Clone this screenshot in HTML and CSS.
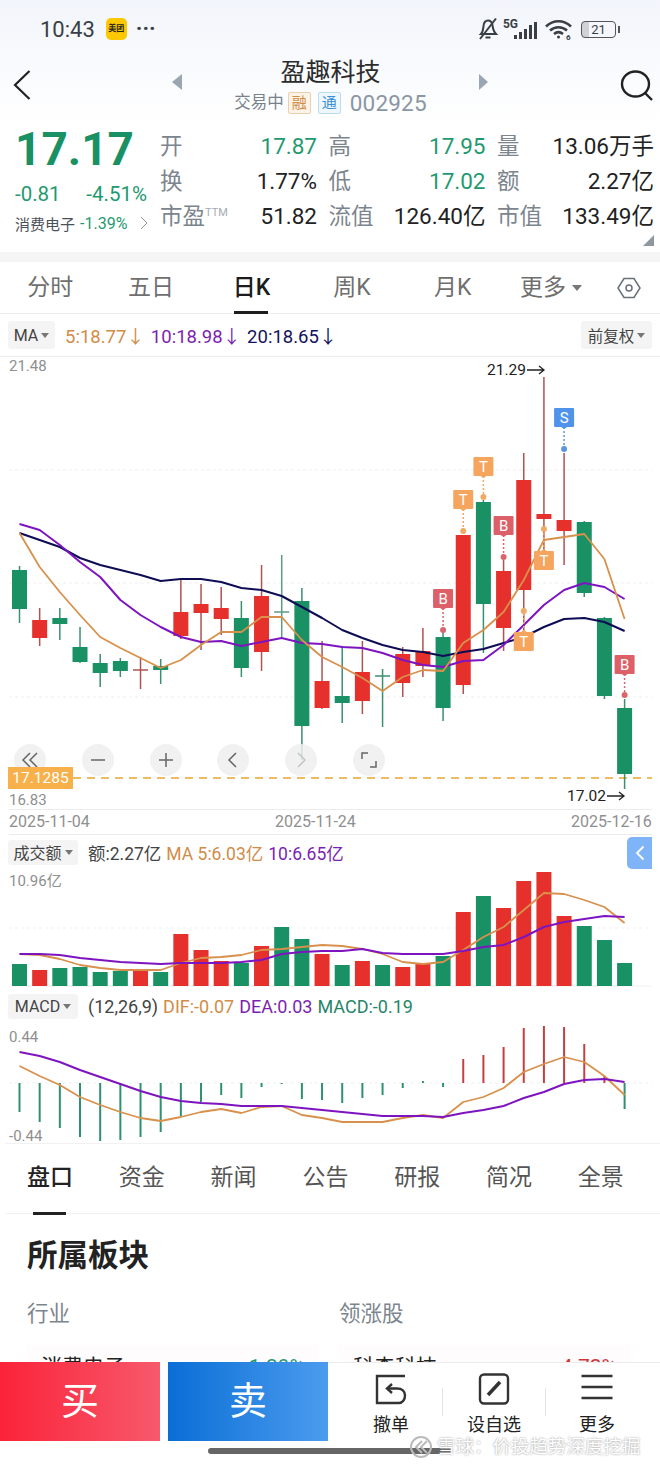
FILE: index.html
```html
<!DOCTYPE html>
<html lang="zh-CN">
<head>
    <meta charset="UTF-8">
    <title>盈趣科技 002925</title>
    <link rel="stylesheet" href="styles.css">
</head>
<body>
<div class="page">

    <!-- 状态栏 -->
    <div class="status">
        <div class="status-left">
            <span class="clock">10:43</span>
            <span class="app-badge">美团</span>
            <span class="status-dots">···</span>
        </div>
        <div class="status-right">
            <svg width="22" height="24" viewBox="0 0 22 24" class="ico-stroke">
                <path d="M4 17c2-2 2-4 2.500-8C7 5 9 3.500 11 3.500S15 5 15.500 8.500 17 15 19 17z"/>
                <path d="M8.500 20.500h5"/>
                <path d="M3 22 19 1.500"/>
            </svg>
            <span class="net">5G</span>
            <svg width="24" height="18" viewBox="0 0 24 18" class="signal">
                <rect x="0" y="13" width="3" height="4"/>
                <rect x="5" y="10" width="3" height="7"/>
                <rect x="10" y="7" width="3" height="10"/>
                <rect x="15" y="3" width="3" height="14"/>
                <rect x="20" y="0" width="3" height="17"/>
            </svg>
            <svg width="27" height="21" viewBox="0 0 27 21" class="ico-stroke wifi">
                <path d="M1 7.500c7-7 18-7 25 0"/>
                <path d="M5 11.500c5-4.500 12-4.500 17 0"/>
                <path d="M9 15c3-2.500 6-2.500 9 0"/>
                <circle cx="13.500" cy="18" r="1.500"/>
                <text class="wifi-gen" x="21" y="20.500">6</text>
            </svg>
            <span class="battery"><span class="battery-level">21</span></span>
        </div>
    </div>

    <!-- 标题栏 -->
    <div class="title-bar">
        <svg class="back" width="18" height="30" viewBox="0 0 18 30"><path d="M16.500 1 2 15l14.500 14"/></svg>
        <span class="tri tri-left"></span>
        <div class="title-mid">
            <div class="stock-name">盈趣科技</div>
            <div class="stock-sub">
                <span>交易中</span>
                <span class="flag flag-rong">融</span>
                <span class="flag flag-tong">通</span>
                <span class="stock-code">002925</span>
            </div>
        </div>
        <span class="tri tri-right"></span>
        <svg class="search" width="34" height="32" viewBox="0 0 34 32">
            <ellipse cx="15.500" cy="14" rx="13.500" ry="12.500"/>
            <path d="M25 23l7 7"/>
        </svg>
    </div>

    <!-- 行情 -->
    <div class="quote">
        <div class="quote-main">
            <div class="price">17.17</div>
            <div class="change"><span>-0.81</span><span>-4.51%</span></div>
            <div class="sector">
                <span>消费电子</span>
                <span class="sector-pct">-1.39%</span>
                <svg width="8" height="14" viewBox="0 0 8 14"><path d="M1 1l6 6-6 6"/></svg>
            </div>
        </div>
        <div class="stats">
            <div class="stat"><span class="stat-label">开</span><span class="down">17.87</span></div>
            <div class="stat"><span class="stat-label">高</span><span class="down">17.95</span></div>
            <div class="stat"><span class="stat-label">量</span><span>13.06万手</span></div>
            <div class="stat"><span class="stat-label">换</span><span>1.77%</span></div>
            <div class="stat"><span class="stat-label">低</span><span class="down">17.02</span></div>
            <div class="stat"><span class="stat-label">额</span><span>2.27亿</span></div>
            <div class="stat"><span class="stat-label">市盈<sup class="ttm">TTM</sup></span><span>51.82</span></div>
            <div class="stat"><span class="stat-label">流值</span><span>126.40亿</span></div>
            <div class="stat"><span class="stat-label">市值</span><span>133.49亿</span></div>
        </div>
        <span class="corner"></span>
    </div>
    <div class="band"></div>

    <!-- 周期 -->
    <div class="periods">
        <span>分时</span>
        <span>五日</span>
        <span class="period-on">日K</span>
        <span>周K</span>
        <span>月K</span>
        <span class="period-more">更多<i class="caret caret-big"></i></span>
        <svg class="hex" width="24" height="22" viewBox="0 0 24 22">
            <path d="M7 1.500h10L23 11l-6 9.500H7L1 11z"/>
            <circle cx="12" cy="11" r="3"/>
        </svg>
    </div>

    <div class="legend ma-legend">
        <span class="chip chip-ma">MA<i class="caret"></i></span>
        <span class="c-orange">5:18.77↓</span>
        <span class="c-purple">10:18.98↓</span>
        <span class="c-navy">20:18.65↓</span>
        <span class="chip chip-right">前复权<i class="caret"></i></span>
    </div>

    <!-- K线 -->
    <div class="panel kline-panel">
        <svg id="kline" class="chart" width="660" height="452" viewBox="0 357 660 452"></svg>
        <span class="axis axis-top">21.48</span>
        <span class="axis axis-low">16.83</span>
        <div class="zoom-btns">
            <span class="zoom-btn"><svg width="20" height="20" viewBox="0 0 20 20"><path d="M10 3 3 10l7 7M17 3l-7 7 7 7"/></svg></span>
            <span class="zoom-btn"><svg width="20" height="20" viewBox="0 0 20 20"><path d="M3 10h14"/></svg></span>
            <span class="zoom-btn"><svg width="20" height="20" viewBox="0 0 20 20"><path d="M3 10h14M10 3v14"/></svg></span>
            <span class="zoom-btn"><svg width="20" height="20" viewBox="0 0 20 20"><path d="M13 3l-7 7 7 7"/></svg></span>
            <span class="zoom-btn zoom-off"><svg width="20" height="20" viewBox="0 0 20 20"><path d="M7 3l7 7-7 7"/></svg></span>
            <span class="zoom-btn"><svg width="20" height="20" viewBox="0 0 20 20"><path d="M9 3H3v6M11 17h6v-6"/></svg></span>
        </div>
        <span class="price-tag">17.1285</span>
    </div>
    <div class="dates">
        <span>2025-11-04</span>
        <span>2025-11-24</span>
        <span>2025-12-16</span>
    </div>

    <!-- 成交额 -->
    <div class="legend vol-legend">
        <span class="chip chip-wide">成交额<i class="caret"></i></span>
        <span>额:2.27亿</span>
        <span class="c-orange">MA 5:6.03亿</span>
        <span class="c-purple">10:6.65亿</span>
        <span class="side-tab"><svg width="10" height="16" viewBox="0 0 10 16"><path d="M8.500 1.500 2 8l6.500 6.500"/></svg></span>
    </div>
    <div class="panel vol-panel">
        <svg id="volume" class="chart" width="660" height="117" viewBox="0 870 660 117"></svg>
        <span class="axis axis-vol">10.96亿</span>
    </div>

    <!-- MACD -->
    <div class="legend macd-legend">
        <span class="chip chip-wide">MACD<i class="caret"></i></span>
        <span>(12,26,9)</span>
        <span class="c-orange">DIF:-0.07</span>
        <span class="c-purple">DEA:0.03</span>
        <span class="c-green">MACD:-0.19</span>
    </div>
    <div class="panel macd-panel">
        <svg id="macd" class="chart" width="660" height="121" viewBox="0 1022 660 121"></svg>
        <span class="axis axis-macd-top">0.44</span>
        <span class="axis axis-macd-low">-0.44</span>
    </div>

    <!-- 详情 -->
    <div class="detail-tabs">
        <span class="detail-on">盘口</span>
        <span>资金</span>
        <span>新闻</span>
        <span>公告</span>
        <span>研报</span>
        <span>简况</span>
        <span>全景</span>
    </div>
    <div class="sectors">
        <h2>所属板块</h2>
        <div class="sector-cols">
            <div class="sector-col">
                <div class="col-head">行业</div>
                <div class="col-row"><span>消费电子</span><span class="down">-1.39%</span></div>
            </div>
            <div class="sector-col">
                <div class="col-head">领涨股</div>
                <div class="col-row"><span>科森科技</span><span class="up">4.72%</span></div>
            </div>
        </div>
    </div>

    <!-- 底部操作栏 -->
    <div class="action-bar">
        <div class="trade">
            <span class="trade-btn buy">买</span>
            <span class="trade-btn sell">卖</span>
        </div>
        <div class="tools">
            <div class="tool">
                <svg width="34" height="32" viewBox="0 0 34 32">
                    <path d="M31 3H3v27h22"/>
                    <path d="M18 11l-5 4.500 5 4.500"/>
                    <path d="M13.500 15.500H23c5 0 8 3 8 7s-2.500 7.500-6 7.500"/>
                </svg>
                <span>撤单</span>
            </div>
            <i class="tool-sep"></i>
            <div class="tool">
                <svg width="34" height="32" viewBox="0 0 34 32">
                    <rect x="3" y="1.500" width="28" height="29" rx="4"/>
                    <path class="pen" d="M11 22 23 9"/>
                </svg>
                <span>设自选</span>
            </div>
            <i class="tool-sep"></i>
            <div class="tool">
                <svg width="34" height="32" viewBox="0 0 34 32">
                    <path d="M1.500 3h31M1.500 14h31M1.500 25h31"/>
                </svg>
                <span>更多</span>
            </div>
        </div>
    </div>
    <div class="home-bar"></div>
    <div class="watermark">
        <svg width="24" height="24" viewBox="0 0 24 24">
            <circle cx="12" cy="12" r="10"/>
            <path d="M13 6 7 12l6 6M18 6l-6 6 6 6"/>
        </svg>
        <span>雪球：价投趋势深度挖掘</span>
    </div>
</div>
<script src="chart.js"></script>
</body>
</html>
```

FILE: styles.css
```css
:root {
    --green: #1a9164;
    --green-text: #1f9a70;
    --red: #e5302c;
    --orange: #d18c48;
    --purple: #7d1fb0;
    --navy: #14125c;
    --text: #222;
    --label: #7c858e;
    --axis: #8f8f8f;
    --line: #ececec;
    --chip: #f5f4f5;
}

body {
    margin: 0;
    font-family: Roboto, "Noto Sans CJK SC", sans-serif;
    color: var(--text);
    background: #fff;
}

.page {
    position: relative;
    width: 660px;
    height: 1467px;
    overflow: hidden;
    background: linear-gradient(#f2f5fb 0, #fff 125px);
}

svg {
    display: block;
    fill: none;
}

/* 状态栏 */
.status {
    height: 56px;
    padding: 2px 44px 0 40px;
    box-sizing: border-box;
    display: flex;
    justify-content: space-between;
    align-items: center;
}

.status-left,
.status-right {
    display: flex;
    align-items: center;
}

.clock {
    font-size: 22px;
    color: #3a3f45;
}

.app-badge {
    width: 21px;
    height: 22px;
    margin-left: 11px;
    border-radius: 5px;
    background: #fcc800;
    font-size: 8px;
    font-weight: 700;
    line-height: 22px;
    text-align: center;
    white-space: nowrap;
}

.status-dots {
    margin-left: 9px;
    font-size: 22px;
    font-weight: 700;
    line-height: 22px;
    color: #3a3f45;
}

.ico-stroke {
    stroke: #3a3f45;
    stroke-width: 2;
}

.net {
    margin: -11px -4px 0 4px;
    font-size: 12px;
    font-weight: 700;
    color: #3a3f45;
}

.signal {
    margin-top: 4px;
    fill: #3a3f45;
}

.wifi {
    margin-left: 7px;
    stroke-width: 2.5;
}

.wifi circle {
    fill: #3a3f45;
    stroke: none;
}

.wifi-gen {
    fill: #3a3f45;
    stroke: none;
    font-size: 8px;
    font-weight: 700;
}

.battery {
    position: relative;
    width: 33px;
    height: 15px;
    margin-left: 9px;
    border: 1.500px solid #555;
    border-radius: 4px;
    background: linear-gradient(90deg, #cfd2d6 21%, transparent 21%);
    text-align: center;
}

.battery::after {
    content: '';
    position: absolute;
    top: 4px;
    right: -5px;
    width: 2px;
    height: 7px;
    background: #555;
}

.battery-level {
    display: block;
    font-size: 13px;
    line-height: 15px;
    color: #3a3f45;
}

/* 标题栏 */
.title-bar {
    height: 66px;
    display: grid;
    grid-template-columns: 172px 10px 297px 9px 1fr;
    align-items: center;
}

.back {
    margin: 0 0 8px 13px;
    stroke: #222;
    stroke-width: 2.200;
}

.tri {
    width: 0;
    height: 0;
    border-top: 8px solid transparent;
    border-bottom: 8px solid transparent;
    margin-bottom: 14px;
}

.tri-left {
    border-right: 10px solid #9aa6b2;
}

.tri-right {
    border-left: 9px solid #9aa6b2;
}

.title-mid {
    margin-bottom: 7px;
    text-align: center;
}

.stock-name {
    font-size: 25px;
    line-height: 32px;
    color: #2c2c2c;
}

.stock-sub {
    display: flex;
    justify-content: center;
    align-items: center;
    margin-top: 2px;
    font-size: 16.500px;
    line-height: 24px;
    color: #79828c;
}

.flag {
    width: 21px;
    height: 20px;
    border-radius: 2px;
    font-size: 15px;
    line-height: 20px;
    text-align: center;
}

.flag-rong {
    margin-left: 4px;
    border: 1px solid #ecd0b0;
    background: #fdf3e7;
    color: #d18c48;
}

.flag-tong {
    margin-left: 7px;
    border: 1px solid #bcdcf0;
    background: #eef7fd;
    color: #3b8fd8;
}

.stock-code {
    margin-left: 9px;
    font-size: 22.500px;
    letter-spacing: 0.200px;
    color: #8a96a3;
}

.search {
    justify-self: end;
    margin-right: 6px;
    margin-bottom: 7px;
    stroke: #222;
    stroke-width: 2.400;
}

/* 行情 */
.quote {
    position: relative;
    height: 130px;
    display: flex;
}

.quote-main {
    width: 160px;
    padding-left: 15px;
    box-sizing: border-box;
}

.price {
    height: 55px;
    font-size: 46px;
    font-weight: 700;
    line-height: 55px;
    color: var(--green);
}

.change {
    width: 132px;
    height: 34px;
    display: flex;
    justify-content: space-between;
    font-size: 20.500px;
    line-height: 34px;
    color: var(--green-text);
}

.sector {
    height: 24px;
    display: flex;
    align-items: center;
    font-size: 15px;
    color: #4c5157;
}

.sector-pct {
    margin-left: 5px;
    font-size: 16px;
    color: var(--green-text);
}

.sector svg {
    margin-left: 13px;
    stroke: #8f979f;
}

.stats {
    display: grid;
    grid-template-columns: repeat(3, 157px);
    grid-auto-rows: 35px;
    column-gap: 11.500px;
    padding-top: 7px;
    font-size: 22.500px;
    line-height: 35px;
}

.stat {
    display: flex;
    justify-content: space-between;
    white-space: nowrap;
}

.stat-label {
    color: var(--label);
}

.ttm {
    font-size: 11px;
    line-height: 0;
    color: #a4abb2;
}

.down {
    color: var(--green-text);
}

.up {
    color: #d0343c;
}

.corner {
    position: absolute;
    right: 6px;
    bottom: 6px;
    border-left: 11px solid transparent;
    border-bottom: 11px solid #8f979f;
}

.band {
    height: 10px;
    background: #f5f5f6;
}

/* 周期 */
.periods {
    height: 52px;
    box-sizing: border-box;
    border-bottom: 1px solid var(--line);
    display: grid;
    grid-template-columns: repeat(5, 100.600px) 96px 1fr;
    align-items: center;
    justify-items: center;
    font-size: 23px;
    line-height: 50px;
    color: #6f6f6f;
}

.period-on {
    position: relative;
    color: #1c1c1c;
    font-weight: 500;
}

.period-on::after {
    content: '';
    position: absolute;
    left: 1px;
    right: 2px;
    bottom: -1px;
    height: 3px;
    background: #1c1c1c;
}

.period-more {
    display: flex;
    align-items: center;
}

.hex {
    margin-right: 1px;
    stroke: #6a7078;
    stroke-width: 1.500;
}

/* 图例 */
.legend {
    display: flex;
    align-items: center;
    white-space: nowrap;
}

.ma-legend {
    height: 42px;
    padding: 0 8px;
    column-gap: 6px;
    font-size: 18.500px;
}

.ma-legend .chip-ma {
    margin-right: 4px;
}

.vol-legend,
.macd-legend {
    position: relative;
    padding-left: 8px;
    column-gap: 5px;
    font-size: 17.500px;
    color: #444;
}

.vol-legend {
    height: 35px;
    padding-bottom: 1px;
    box-sizing: border-box;
}

.macd-legend {
    height: 35px;
    padding-top: 3px;
    box-sizing: border-box;
    font-size: 18px;
}

.c-orange { color: var(--orange); }
.c-purple { color: var(--purple); }
.c-navy { color: var(--navy); }
.c-green { color: #27856a; }

.chip {
    display: flex;
    align-items: center;
    justify-content: center;
    box-sizing: border-box;
    border-radius: 3px;
    background: var(--chip);
    font-size: 16px;
    color: #444;
}

.chip-ma {
    width: 47px;
    height: 28px;
}

.chip-right {
    width: 71px;
    height: 28px;
    margin-left: auto;
    font-size: 15.500px;
}

.chip-wide {
    width: 70px;
    height: 25px;
    margin-right: 5px;
}

.caret {
    display: inline-block;
    margin-left: 3px;
    border-left: 4px solid transparent;
    border-right: 4px solid transparent;
    border-top: 5px solid #777;
}

.caret-big {
    margin-left: 6px;
    border-left-width: 5px;
    border-right-width: 5px;
    border-top-width: 6px;
}

.side-tab {
    position: absolute;
    top: 2px;
    right: 8px;
    width: 25px;
    height: 32px;
    border-radius: 5px 0 0 5px;
    background: #80b4f8;
    display: flex;
    align-items: center;
    justify-content: center;
    stroke: #fff;
    stroke-width: 1.800;
}

/* 图表 */
.panel {
    position: relative;
}

.kline-panel {
    height: 452px;
    border-top: 1px solid var(--line);
}

.vol-panel {
    height: 117px;
}

.macd-panel {
    height: 121px;
}

.axis {
    position: absolute;
    left: 9px;
    font-size: 15px;
    line-height: 18px;
    color: var(--axis);
}

.axis-top { top: 0; }
.axis-low { top: 434px; }
.axis-vol { top: 2px; }
.axis-macd-top { top: 6px; }
.axis-macd-low { top: 105px; }

.price-tag {
    position: absolute;
    left: 8px;
    top: 410px;
    width: 65px;
    height: 22px;
    background: #f7b04a;
    color: #fff;
    font-size: 15.500px;
    line-height: 22px;
    text-align: center;
}

.zoom-btns {
    position: absolute;
    left: 14px;
    top: 387px;
    display: flex;
    column-gap: 35.800px;
}

.zoom-btn {
    width: 32px;
    height: 32px;
    border-radius: 50%;
    background: rgba(240, 238, 240, 0.85);
    display: flex;
    align-items: center;
    justify-content: center;
    stroke: #666;
    stroke-width: 1.500;
}

.zoom-off {
    stroke: #c4c4c4;
}

.dates {
    height: 26px;
    box-sizing: border-box;
    margin: 0 8px 0 9px;
    border-top: 1px solid var(--line);
    border-bottom: 1px solid var(--line);
    display: grid;
    grid-template-columns: 266px 296px 1fr;
    font-size: 16px;
    line-height: 24px;
    color: var(--axis);
}

/* 详情 */
.detail-tabs {
    height: 71px;
    box-sizing: border-box;
    margin-left: 5px;
    border-top: 1px solid #f1f1f1;
    border-bottom: 1px solid #f1f1f1;
    padding: 0 0 8px 22px;
    display: flex;
    column-gap: 45.800px;
    align-items: center;
    font-size: 23px;
    color: #555;
}

.detail-on {
    position: relative;
    color: #222;
    font-weight: 500;
}

.detail-on::after {
    content: '';
    position: absolute;
    left: 6px;
    right: 7px;
    bottom: -23px;
    height: 3px;
    background: #222;
}

.sectors {
    padding: 0 27px;
}

.sectors h2 {
    margin: 24px 0 0;
    font-size: 30.500px;
    font-weight: 700;
    line-height: 36px;
}

.sector-cols {
    display: flex;
    margin-top: 25px;
}

.sector-col {
    flex: none;
    width: 312px;
}

.col-head {
    font-size: 21.500px;
    line-height: 30px;
    color: var(--label);
}

.col-row {
    width: 292px;
    margin-top: 16px;
    padding: 8px 0 0 14px;
    box-sizing: border-box;
    display: flex;
    justify-content: space-between;
    font-size: 21px;
    line-height: 28px;
    background: #fefcfc;
}

.col-row span:last-child {
    margin-right: 14px;
}

/* 底部操作栏 */
.action-bar {
    position: absolute;
    left: 0;
    right: 0;
    bottom: 0;
    height: 105px;
    background: #fff;
    display: flex;
}

.trade {
    width: 328px;
    height: 79px;
    display: flex;
    column-gap: 8px;
}

.trade-btn {
    flex: 1;
    color: #fff;
    font-size: 38px;
    line-height: 79px;
    text-align: center;
}

.buy {
    background: linear-gradient(90deg, #fb2339, #f7596c);
}

.sell {
    background: linear-gradient(90deg, #0a6ed6, #4b9cee);
}

.tools {
    flex: 1;
    height: 79px;
    box-sizing: border-box;
    border-top: 1px solid var(--line);
    padding: 10px 0 0 45px;
    display: flex;
    column-gap: 33px;
    align-items: flex-start;
}

.tool {
    width: 36px;
    display: flex;
    flex-direction: column;
    align-items: center;
    font-size: 18px;
    line-height: 20px;
    color: #222;
    white-space: nowrap;
    stroke: #333;
    stroke-width: 2.400;
}

.tool svg {
    margin-bottom: 10px;
}

.tool .pen {
    stroke-width: 3.500;
}

.tool-sep {
    flex: none;
    width: 1px;
    height: 28px;
    margin-top: 15px;
    background: #e4e4e4;
}

.home-bar {
    position: absolute;
    left: 208px;
    bottom: 13px;
    width: 244px;
    height: 6px;
    border-radius: 3px;
    background: #666;
}

.watermark {
    position: absolute;
    left: 409px;
    bottom: 8px;
    display: flex;
    align-items: center;
    column-gap: 4px;
    font-size: 18.500px;
    line-height: 20px;
    color: #fff;
    text-shadow: 0 0 2px #888;
    white-space: nowrap;
    stroke: #bbb;
    stroke-width: 2;
}
```

FILE: chart.js
```js
// 每根K线的横坐标
const X0 = 19.5;
const STEP = 20.17;

function cx(i) {
    return X0 + i * STEP;
}

// [实体上沿, 实体下沿, 上影, 下影, 红/绿]，单位是页面像素
const candles = [
    [570, 609, 566, 623, 'g'], [620, 638, 608, 646, 'r'], [618, 624, 608, 640, 'g'],
    [647, 662, 627, 663, 'g'], [663, 673, 654, 687, 'g'], [661, 671, 658, 677, 'g'],
    [670, 670, 657, 689, 'r'], [666, 670, 659, 684, 'g'], [612, 636, 578, 639, 'r'],
    [604, 613, 584, 650, 'r'], [608, 619, 587, 635, 'r'], [618, 668, 601, 677, 'g'],
    [596, 652, 565, 671, 'r'], [612, 612, 555, 637, 'p'], [601, 726, 588, 760, 'g'],
    [681, 708, 641, 709, 'r'], [696, 703, 646, 723, 'g'], [672, 701, 641, 714, 'r'],
    [676, 676, 669, 727, 'g'], [654, 683, 647, 697, 'r'], [651, 666, 628, 677, 'r'],
    [637, 708, 632, 721, 'g'], [535, 685, 535, 694, 'r'], [502, 604, 500, 653, 'g'],
    [571, 628, 560, 651, 'r'], [480, 590, 453, 632, 'r'], [514, 519, 377, 550, 'r'],
    [520, 531, 453, 565, 'r'], [522, 593, 521, 597, 'g'], [618, 696, 617, 699, 'g'],
    [708, 774, 699, 789, 'g']
];

const ma5 = [533, 567, 592, 615, 637, 648, 658, 668, 660, 645, 632, 632, 617, 617, 640, 657,
    667, 678, 691, 677, 670, 671, 643, 630, 612, 580, 540, 537, 534, 559, 619];
const ma10 = [524, 530, 545, 562, 577, 600, 615, 627, 637, 642, 641, 646, 642, 638, 643, 644,
    647, 648, 653, 660, 665, 667, 661, 660, 645, 625, 605, 590, 583, 587, 599];
const ma20 = [533, 540, 547, 558, 565, 570, 575, 581, 579, 579, 582, 588, 590, 596, 607, 618,
    630, 638, 645, 650, 652, 656, 652, 649, 643, 637, 627, 619, 618, 622, 631];

const volTops = [964, 970, 968, 967, 972, 971, 970, 972, 934, 950, 961, 963, 946, 927, 939, 954,
    965, 961, 965, 967, 964, 956, 912, 896, 908, 881, 872, 916, 926, 940, 963];
const volRed = [1, 6, 8, 9, 10, 12, 15, 17, 19, 20, 22, 24, 25, 26, 27];
const volMa5 = [954, 955, 959, 965, 968, 970, 970, 970, 963, 958, 957, 955, 950, 949, 947, 945,
    946, 949, 954, 962, 964, 962, 950, 937, 927, 910, 893, 894, 900, 907, 923];
const volMa10 = [954, 954, 955, 958, 960, 962, 963, 964, 963, 963, 963, 962, 960, 954, 952, 951,
    951, 949, 953, 954, 954, 954, 951, 947, 945, 937, 927, 922, 919, 916, 917];

const macdBars = [1112, 1122, 1128, 1137, 1141, 1140, 1137, 1132, 1116, 1102, 1095, 1098, 1087, 1084, 1099, 1100,
    1103, 1098, 1095, 1088, 1081, 1087, 1059, 1055, 1047, 1028, 1026, 1027, 1044, 1076, 1109];
const macdRedFrom = 22;
const macdRedTo = 29;
const dif = [1066, 1076, 1085, 1097, 1105, 1112, 1118, 1121, 1117, 1112, 1109, 1113, 1107, 1106, 1115, 1118,
    1122, 1122, 1122, 1118, 1115, 1118, 1102, 1097, 1088, 1072, 1064, 1057, 1062, 1076, 1095];
const dea = [1052, 1056, 1062, 1070, 1077, 1084, 1091, 1097, 1101, 1103, 1104, 1106, 1106, 1106, 1108, 1110,
    1112, 1114, 1116, 1116, 1116, 1117, 1113, 1110, 1106, 1098, 1092, 1084, 1080, 1079, 1082];

const COLORS = {
    g: '#1a9164', r: '#e5302c', p: '#a9c4b8',
    gWick: '#3a8f72', rWick: '#ad5350', pWick: '#5f9a86',
    orange: '#d8914c', purple: '#7d14c0', navy: '#0e0c55'
};

function rect(x, y, w, h, fill) {
    return `<rect x="${x}" y="${y}" width="${w}" height="${h}" fill="${fill}"/>`;
}

function line(x1, y1, x2, y2, color, width, dash) {
    const d = dash ? ` stroke-dasharray="${dash}"` : '';
    return `<line x1="${x1}" y1="${y1}" x2="${x2}" y2="${y2}" stroke="${color}" stroke-width="${width}"${d}/>`;
}

function poly(values, color, width) {
    const pts = values.map((y, i) => cx(i).toFixed(1) + ',' + y).join(' ');
    return `<polyline points="${pts}" fill="none" stroke="${color}" stroke-width="${width}" stroke-linejoin="round"/>`;
}

function label(x, y, text, anchor, size, fill) {
    return `<text x="${x}" y="${y}" text-anchor="${anchor}" font-size="${size}" fill="${fill}">${text}</text>`;
}

// 最高最低价：数字加一根指向K线的箭头
function extreme(tip, y, text) {
    const arrow = `<path d="M${tip - 17} ${y}H${tip}M${tip - 5} ${y - 4}l5 4-5 4" fill="none" stroke="#222" stroke-width="1.300"/>`;
    return label(tip - 18, y + 5, text, 'end', 15.500, '#222') + arrow;
}

// 买卖点标记：box 是方块顶边，dot 是圆点的纵坐标
function marker(i, box, dot, letter, color, dotColor) {
    const x = cx(i);
    const below = dot > box;
    const from = below ? box + 19 : box;
    let out = line(x, from, x, dot, dotColor, 1.5, '2 2');
    out += `<circle cx="${x}" cy="${dot}" r="3" fill="${dotColor}"/>`;
    out += `<rect x="${x - 10}" y="${box}" width="20" height="19" rx="1" fill="${color}"/>`;
    const tipY = below ? box + 21 : box - 2;
    out += `<path d="M${x - 3} ${below ? box + 19 : box}h6L${x} ${tipY}z" fill="${color}"/>`;
    out += label(x, box + 15, letter, 'middle', 15, '#fff');
    return out;
}

function drawKline() {
    let out = '';
    [470, 583, 697].forEach(y => {
        out += line(9, y, 652, y, '#efefef', 1, '3 3');
    });
    out += line(73, 778, 652, 778, '#ecbb62', 2, '8 6');

    candles.forEach((c, i) => {
        const x = cx(i);
        const kind = c[4];
        out += line(x, c[2], x, c[3], COLORS[kind + 'Wick'], 1.5);
        if (c[0] === c[1]) {
            out += line(x - 7.5, c[0], x + 7.5, c[0], COLORS[kind + 'Wick'], 1.5);
        } else {
            out += rect(x - 7.5, c[0], 15, c[1] - c[0], COLORS[kind]);
        }
    });

    out += poly(ma20, COLORS.navy, 2);
    out += poly(ma10, COLORS.purple, 2);
    out += poly(ma5, COLORS.orange, 1.8);

    out += marker(21, 589, 630, 'B', '#dd6068', '#d9666c');
    out += marker(22, 490, 531, 'T', '#f6a55f', '#eeaa66');
    out += marker(23, 457, 497, 'T', '#f6a55f', '#eeaa66');
    out += marker(24, 516, 557, 'B', '#dd6068', '#d9666c');
    out += marker(25, 632, 611, 'T', '#f6a55f', '#eeaa66');
    out += marker(26, 551, 529, 'T', '#f6a55f', '#eeaa66');
    out += marker(27, 408, 449, 'S', '#4f94ea', '#5b97dc');
    out += marker(30, 655, 695, 'B', '#dd6068', '#d9666c');

    out += extreme(544, 370, '21.29');
    out += extreme(624, 796, '17.02');
    document.getElementById('kline').innerHTML = out;
}

function drawVolume() {
    let out = line(9, 928, 652, 928, '#f1f1f1', 1, '3 3');
    out += line(9, 986, 652, 986, '#f0f0f0', 1);
    volTops.forEach((top, i) => {
        const color = volRed.includes(i) ? COLORS.r : COLORS.g;
        out += rect(cx(i) - 7.5, top, 15, 986 - top, color);
    });
    out += poly(volMa5, COLORS.orange, 1.8);
    out += poly(volMa10, COLORS.purple, 2);
    document.getElementById('volume').innerHTML = out;
}

function drawMacd() {
    let out = line(9, 1083, 652, 1083, '#efefef', 1, '3 3');
    macdBars.forEach((y, i) => {
        const x = cx(i);
        const red = i >= macdRedFrom && i <= macdRedTo;
        out += line(x, red ? y : 1083, x, red ? 1083 : y, red ? '#c4403e' : '#2f9070', 2);
    });
    out += poly(dif, COLORS.orange, 1.8);
    out += poly(dea, COLORS.purple, 2);
    document.getElementById('macd').innerHTML = out;
}

drawKline();
drawVolume();
drawMacd();
```
